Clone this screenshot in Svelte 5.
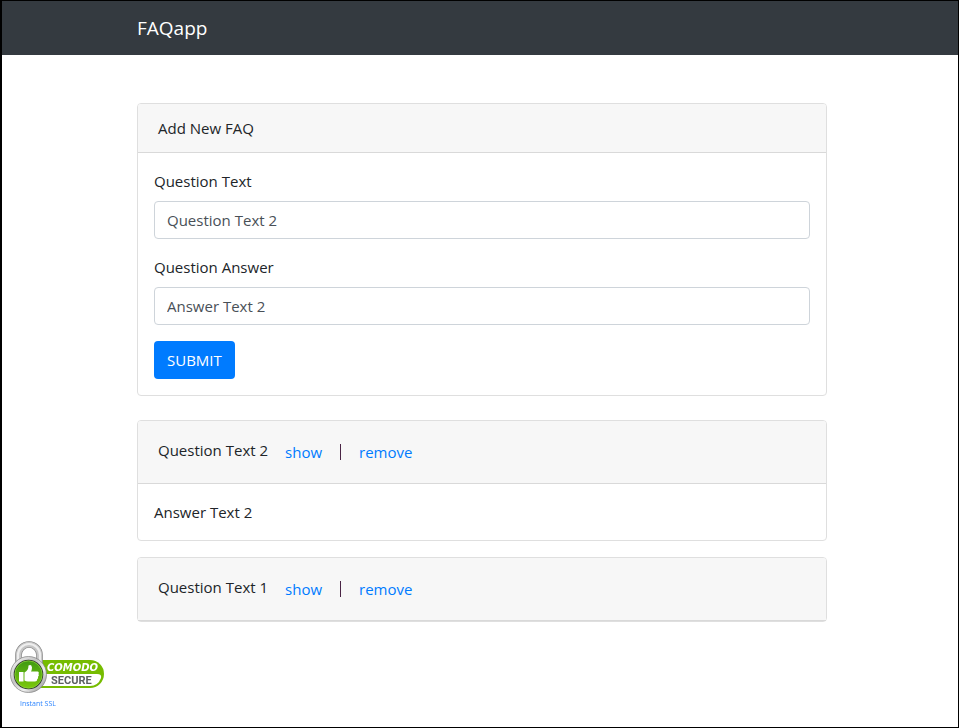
<script>
	let question = $state("")
	let answer = $state("")
	let faqs = $state([
		{ id: 2, question: "Question Text 2", answer: "Answer Text 2", open: true },
		{ id: 1, question: "Question Text 1", answer: "Answer Text 1", open: false }
	])

	function add(e) {
		e.preventDefault()
		if (!question || !answer) return
		faqs.unshift({ id: Date.now(), question, answer, open: false })
		question = ""
		answer = ""
	}
	function toggle(faq) {
		faq.open = !faq.open
	}
	function remove(id) {
		faqs = faqs.filter(f => f.id !== id)
	}
</script>

<div class="page">
	<nav class="navbar">
		<div class="container">
			<a class="brand" href="#home">FAQapp</a>
		</div>
	</nav>
	<main class="container">
		<section class="card">
			<div class="card_header">Add New FAQ</div>
			<form class="card_body" onsubmit={add}>
				<div class="form_group">
					<label for="question">Question Text</label>
					<input id="question" type="text" placeholder="Question Text 2" bind:value={question}>
				</div>
				<div class="form_group">
					<label for="answer">Question Answer</label>
					<input id="answer" type="text" placeholder="Answer Text 2" bind:value={answer}>
				</div>
				<button class="btn primary" type="submit">SUBMIT</button>
			</form>
		</section>
		<div class="faqs">
			{#each faqs as faq (faq.id)}
			<section class="card">
				<div class="card_header faq_header">
					<span class="question">{faq.question}</span>
					<button class="btn link" type="button" onclick={() => toggle(faq)}>show</button>
					<span class="divider"></span>
					<button class="btn link" type="button" onclick={() => remove(faq.id)}>remove</button>
				</div>
				{#if faq.open}
				<div class="card_body">{faq.answer}</div>
				{/if}
			</section>
			{/each}
		</div>
	</main>
	<div class="trust">
		<svg width="95" height="53" viewBox="0 0 95 53" role="img" aria-label="Comodo Secure">
			<defs>
				<linearGradient id="steel" x1="0" y1="0" x2="1" y2="1">
					<stop offset="0" stop-color="#fafafa" />
					<stop offset="0.4" stop-color="#c4c4c4" />
					<stop offset="0.65" stop-color="#f0f0f0" />
					<stop offset="1" stop-color="#777" />
				</linearGradient>
				<linearGradient id="leaf" x1="0" y1="0" x2="0" y2="1">
					<stop offset="0" stop-color="#3f9a12" />
					<stop offset="1" stop-color="#7cc80c" />
				</linearGradient>
			</defs>
			<path d="M30 19H80A14 14 0 0 1 80 47H30Z" fill="#76bc00" />
			<path d="M30 33H87Q92 33 91 37Q88 45 80 45H30Z" fill="#fff" />
			<path d="M8.500 24V14A10.500 10.500 0 0 1 29.500 14V24" fill="none" stroke="#808080" stroke-width="6.600" />
			<path d="M8.500 24V14A10.500 10.500 0 0 1 29.500 14V24" fill="none" stroke="#c6c6c6" stroke-width="5.400" />
			<path d="M8 24V14A11 11 0 0 1 30 14V24" fill="none" stroke="#eee" stroke-width="2.200" />
			<circle cx="18.500" cy="33.500" r="18" fill="url(#steel)" stroke="#808080" stroke-width="0.700" />
			<circle cx="18.500" cy="33.500" r="14.800" fill="#303630" />
			<circle cx="18.500" cy="33.500" r="13.700" fill="url(#leaf)" stroke="#8bd43a" stroke-width="0.800" />
			<path d="M9 31h4.500v9.500H9zM14.500 31.500Q18.500 29.500 18.500 24.500Q21.500 23 22 26.500Q22 28.500 21 30.500H27.500Q29.500 31 28.500 33Q29.500 34.500 28 35.700Q28.600 37.500 27.200 38.200Q27.300 40.500 25 40.500H18Q16 40.500 14.500 39.500Z" fill="#fff" />
			<text x="37" y="30" class="logo_top">COMODO</text>
			<text x="41" y="43" class="logo_bottom">SECURE</text>
		</svg>
		<a href="#ssl">Instant SSL</a>
	</div>
</div>

<style>
	:global(body) {
		background-color: #fff;
		color: #212529;
		font-family: "Segoe UI", "Open Sans", "Noto Sans", sans-serif;
		font-size: 15px;
		line-height: 24px;
	}
	* {
		box-sizing: border-box;
	}
	.page {
		min-height: 100vh;
		border: 1px solid #000;
		border-left-width: 2px;
	}
	.container {
		max-width: 724px;
		margin: 0 auto;
		padding: 0 15px 0 19px;
	}
	.navbar {
		padding: 12px 0;
		background-color: #343a40;
	}
	.brand {
		display: block;
		color: #fff;
		font-size: 19px;
		line-height: 30px;
		text-decoration: none;
	}
	main.container {
		margin-top: 48px;
	}
	.card {
		border: 1px solid #dfdfdf;
		border-radius: 4px;
		background-color: #fff;
	}
	.card_header {
		padding: 12px 20px;
		border-bottom: 1px solid #d9d9d9;
		border-radius: 3px 3px 0 0;
		background-color: #f7f7f7;
	}
	.card_body {
		padding: 16px;
	}
	.form_group {
		display: flex;
		flex-direction: column;
		gap: 8px;
		margin-bottom: 16px;
	}
	input {
		width: 100%;
		height: 38px;
		padding: 6px 12px;
		border: 1px solid #ced4da;
		border-radius: 4px;
		background-color: #fff;
		color: #495057;
		font: inherit;
	}
	input::placeholder {
		color: #495057;
		opacity: 1;
	}
	.btn {
		height: 38px;
		padding: 6px 12px;
		border: 1px solid transparent;
		border-radius: 4px;
		font: inherit;
		cursor: pointer;
	}
	.primary {
		display: block;
		background-color: #007bff;
		color: #fff;
	}
	.link {
		background-color: transparent;
		color: #007bff;
	}
	.link:hover {
		text-decoration: underline;
	}
	.faqs {
		display: flex;
		flex-direction: column;
		gap: 16px;
		margin-top: 24px;
	}
	.faq_header {
		display: flex;
		align-items: center;
		gap: 4px;
	}
	.question {
		padding-bottom: 4px;
	}
	.divider {
		width: 1px;
		height: 16px;
		margin: 0 1px;
		background-color: #4a2545;
	}
	.trust {
		position: fixed;
		left: 10px;
		bottom: 18px;
		display: flex;
		flex-direction: column;
		gap: 4px;
	}
	.trust a {
		padding-left: 10px;
		color: #2f86ff;
		font-size: 7px;
		line-height: 12px;
		text-decoration: none;
	}
	.logo_top {
		fill: #fff;
		font: italic 700 10px "DejaVu Sans", sans-serif;
	}
	.logo_bottom {
		fill: #5c6062;
		font: 700 11px Roboto, "Liberation Sans", sans-serif;
	}
</style>
